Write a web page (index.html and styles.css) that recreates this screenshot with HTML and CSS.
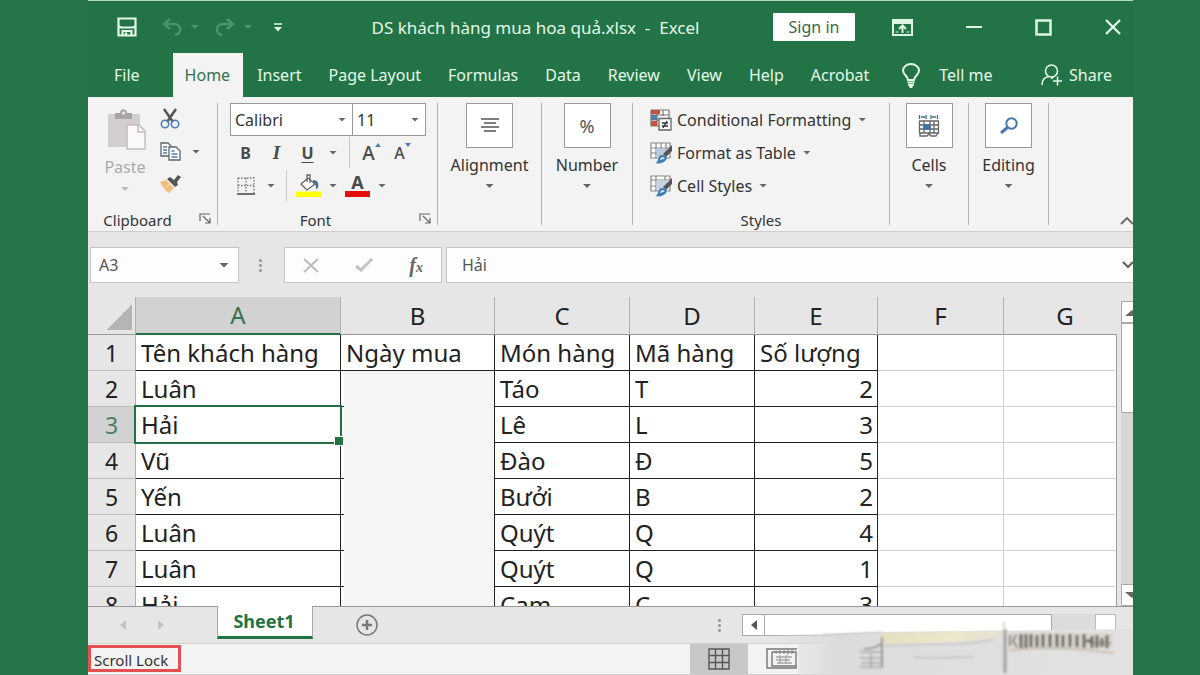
FILE: index.html
```html
<!DOCTYPE html>
<html lang="en">
<head>
<meta charset="utf-8">
<title>DS khách hàng mua hoa quả.xlsx - Excel</title>
<link rel="stylesheet" href="styles.css">
</head>
<body>
<div class="window">
  <header class="titlebar">
    <div class="quick">
      <button class="plain" aria-label="Save"><svg width="20" height="20" viewBox="0 0 20 20" fill="none" stroke="#e4f8e8" stroke-width="2.200"><path d="M1.500 1.500h17v17h-17z"/><path d="M2 9.500l2 1h12l2-1" /><path d="M5.500 19v-5h9v5"/><path d="M9 15.500v3" stroke-width="2.500"/></svg></button>
      <button class="plain undo" aria-label="Undo"><svg width="20" height="18" viewBox="0 0 20 18" fill="none" stroke="#4b9469" stroke-width="2.500"><path d="M8 1L2 6l6 5M2 6h10c8 0 8 10 1 11"/></svg></button>
      <i class="caret dim"></i>
      <button class="plain redo" aria-label="Redo"><svg width="20" height="18" viewBox="0 0 20 18" fill="none" stroke="#4b9469" stroke-width="2.500"><path d="M12 1l6 5-6 5M18 6H8C0 6 0 16 7 17"/></svg></button>
      <i class="caret dim"></i>
      <button class="plain custom" aria-label="Customize Quick Access Toolbar"><svg width="8" height="9" viewBox="0 0 8 9"><path d="M0 1h8" stroke="#e4f8e8" stroke-width="1.500"/><path d="M0 4h8L4 8.500z" fill="#e4f8e8"/></svg></button>
    </div>
    <h1 class="doc">DS khách hàng mua hoa quả.xlsx&nbsp; - &nbsp;Excel</h1>
    <div class="winctl">
      <button class="signin">Sign in</button>
      <button class="plain" aria-label="Ribbon display options"><svg width="21" height="17" viewBox="0 0 21 17" fill="none" stroke="#dff5e4" stroke-width="2"><path d="M1 1h19v15H1z"/><path d="M1 3.500h19" stroke-width="3"/><path d="M10.500 14V7M7 10l3.500-3.500L14 10"/><path d="M3.500 13h3M14.500 13h3" stroke-width="1"/></svg></button>
      <button class="plain" aria-label="Minimize"><svg width="16" height="17" viewBox="0 0 16 17"><path d="M0 8h16" stroke="#dff5e4" stroke-width="2"/></svg></button>
      <button class="plain" aria-label="Maximize"><svg width="17" height="17" viewBox="0 0 17 17"><path d="M1.500 1.500h14v14h-14z" fill="none" stroke="#dff5e4" stroke-width="2.500"/></svg></button>
      <button class="plain" aria-label="Close"><svg width="16" height="16" viewBox="0 0 16 16"><path d="M1 1l14 14M15 1L1 15" stroke="#dff5e4" stroke-width="2.400"/></svg></button>
    </div>
  </header>

  <nav class="tabs">
    <button class="tab file">File</button>
    <button class="tab active">Home</button>
    <button class="tab">Insert</button>
    <button class="tab">Page Layout</button>
    <button class="tab">Formulas</button>
    <button class="tab">Data</button>
    <button class="tab">Review</button>
    <button class="tab">View</button>
    <button class="tab">Help</button>
    <button class="tab">Acrobat</button>
    <button class="tab tell"><svg width="18" height="25" viewBox="0 0 18 25" fill="none" stroke="#e4f8e8" stroke-width="2"><path d="M6 17c0-4-5-5-5-9.500a8 6.500 0 0 1 16 0C17 12 12 13 12 17z"/><path d="M5.500 19.500h7M6 22h6M7.500 24h3"/></svg>Tell me</button>
    <button class="tab share"><svg width="21" height="22" viewBox="0 0 21 22" fill="none" stroke="#e4f8e8" stroke-width="1.600"><circle cx="10.500" cy="7" r="6"/><path d="M1 21c0-5 3-8 7-8.500M10 14.500l3-2M12 17h9M16.500 12.500v9"/></svg>Share</button>
  </nav>

  <section class="ribbon">
    <div class="group clipboard">
      <div class="gbody">
        <button class="paste"><svg width="40" height="42" viewBox="0 0 40 42"><path d="M1 5h32v33H1z" fill="#d3ced2"/><path d="M8 10V4h5c0-5 7-5 7 0h5v6z" fill="#a9a6a9"/><circle cx="16.500" cy="4" r="1.500" fill="#f3f3f3"/><path d="M20 16h12l6 6v18H20z" fill="#fbf8fb" stroke="#c2bdc1" stroke-width="1.500"/><path d="M31 16v7h7" fill="none" stroke="#c2bdc1" stroke-width="1.500"/></svg><span>Paste</span><i class="caret light"></i></button>
        <div class="clips">
          <button class="plain" aria-label="Cut"><svg width="20" height="21" viewBox="0 0 20 21" fill="none"><path d="M4 1l9 13M16 1L7 14" stroke="#555" stroke-width="2.500"/><circle cx="5" cy="16" r="3.700" stroke="#4d7fae" stroke-width="1.600"/><circle cx="15" cy="16" r="3.700" stroke="#4d7fae" stroke-width="1.600"/></svg></button>
          <div class="copyrow"><button class="plain" aria-label="Copy"><svg width="21" height="19" viewBox="0 0 21 19" fill="#fff" stroke="#5c6670" stroke-width="1.300"><path d="M1 1h7l3 3v10H1z"/><path d="M9 5h7l4 4v9H9z"/><path d="M3 5h4M3 8h4M3 11h4M11.500 9h3M11.500 12h6M11.500 15h6" stroke="#4d7fae"/></svg></button><i class="caret"></i></div>
          <button class="plain" aria-label="Format Painter"><svg width="21" height="19" viewBox="0 0 21 19"><path d="M0 8l6-2 8 8-5 5C5 17 2 12 0 8z" fill="#f0bf7d"/><path d="M7 5l3-2 4 3 4-5 3 2-4 5 1 3-3 2z" fill="#555"/><path d="M5 14l5-4" stroke="#fbe3bd"/></svg></button>
        </div>
      </div>
      <div class="gname"><span>Clipboard</span><button class="plain launch" aria-label="Clipboard settings"><svg width="12" height="11" viewBox="0 0 12 11" fill="none" stroke="#666" stroke-width="1.200"><path d="M1 8V1h10M4 3l7 7M11 5v5H6"/></svg></button></div>
    </div>

    <div class="group font">
      <div class="fontbox">
        <div class="combos">
          <div class="combo family"><select aria-label="Font"><option>Calibri</option></select><i class="caret"></i></div>
          <div class="combo size"><select aria-label="Font size"><option>11</option></select><i class="caret"></i></div>
        </div>
        <div class="frow">
          <button class="fb">B</button><button class="fb ital">I</button><button class="fb under">U</button><button class="fc" aria-label="Underline options"><i class="caret"></i></button>
          <span class="vsep"></span>
          <button class="fb grow" aria-label="Increase font size">A<svg width="6" height="16" viewBox="0 0 6 16"><path d="M0 4h6L3 0z" fill="#4d7fae"/></svg></button><button class="fb shrink" aria-label="Decrease font size">A<svg width="6" height="16" viewBox="0 0 6 16"><path d="M0 0h6L3 4z" fill="#4d7fae"/></svg></button>
        </div>
        <div class="frow">
          <button class="fb" aria-label="Borders"><svg width="18" height="18" viewBox="0 0 18 18" fill="none" stroke="#777" stroke-width="1.300"><path d="M1 1h16v15M1 1v15M9 1v15M1 8.500h16" stroke-dasharray="1.500 1.500"/><path d="M0 17h18" stroke="#444" stroke-width="1.500"/></svg></button><button class="fc" aria-label="Border options"><i class="caret"></i></button>
          <span class="vsep s2"></span>
          <button class="fb paint" aria-label="Fill color"><svg width="25" height="23" viewBox="0 0 25 23"><path d="M0 17.500h25V23H0z" fill="#ffff08"/><path d="M5 10l7-6 7 6-8 6z" fill="#fff" stroke="#666" stroke-width="1.300"/><path d="M11 8V1h3v8" fill="none" stroke="#666" stroke-width="1.300"/><path d="M17 6c5 0 6 3 5 8l-2 1c0-4-1-5-3-6z" fill="#4d7199"/></svg></button><button class="fc" aria-label="Fill options"><i class="caret"></i></button>
          <button class="fb paint" aria-label="Font color"><span class="inkletter">A</span></button><button class="fc" aria-label="Font color options"><i class="caret"></i></button>
        </div>
      </div>
      <div class="gname"><span>Font</span><button class="plain launch" aria-label="Font settings"><svg width="12" height="11" viewBox="0 0 12 11" fill="none" stroke="#666" stroke-width="1.200"><path d="M1 8V1h10M4 3l7 7M11 5v5H6"/></svg></button></div>
    </div>

    <div class="group align"><button class="big"><span class="tile"><svg width="20" height="16" viewBox="0 0 20 16" stroke="#555" stroke-width="1.300"><path d="M1 1h18M4 5h12M1 9h18M4 13h12"/></svg></span>Alignment<i class="caret"></i></button></div>
    <div class="group number"><button class="big"><span class="tile pct">%</span>Number<i class="caret"></i></button></div>

    <div class="group styles">
      <div class="slist">
        <button class="sitem"><svg width="22" height="22" viewBox="0 0 22 22"><path d="M1 1h18v8M1 1v16h8M1 6h18M1 11h8M7 1v16M13 1v6" fill="#fff" stroke="#777" stroke-width="1.200"/><path d="M1 1h9v4H1zM1 12h6v5H1z" fill="#c9503f"/><path d="M1 6h6v5H1z" fill="#4d7fae"/><path d="M9 9.500h12V21H9z" fill="#fff" stroke="#666" stroke-width="1.300"/><path d="M12 14h6M12 17h6M17 12l-4 7" stroke="#333" stroke-width="1.300"/></svg>Conditional Formatting<i class="caret"></i></button>
        <button class="sitem"><svg width="22" height="22" viewBox="0 0 22 22"><path d="M1 1h19v15H1zM1 6h19M1 11h19M6 1v15M11 1v15M16 1v15" fill="#fff" stroke="#888" stroke-width="1.200"/><path d="M6.500 6.500h9v9h-9z" fill="#b9cbe0"/><path d="M22 3v6l-6 6-3-3z" fill="#555"/><path d="M5 21c4 0 2-8 7-8 4 0 6 3 4 5-2 3-7 4-11 3z" fill="#3f7fb8"/><path d="M11 18c0-2 2-3 3-1" fill="none" stroke="#dbe9f5" stroke-width="1.500"/></svg>Format as Table<i class="caret"></i></button>
        <button class="sitem"><svg width="22" height="22" viewBox="0 0 22 22"><path d="M1 1h19v15H1zM1 5h19M6 1v15M15 1v4M1 11h5" fill="#fff" stroke="#888" stroke-width="1.200"/><path d="M6.500 5.500h11v9h-11z" fill="#c5d3e4"/><path d="M22 3v6l-6 6-3-3z" fill="#555"/><path d="M5 21c4 0 2-8 7-8 4 0 6 3 4 5-2 3-7 4-11 3z" fill="#3f7fb8"/><path d="M11 18c0-2 2-3 3-1" fill="none" stroke="#dbe9f5" stroke-width="1.500"/></svg>Cell Styles<i class="caret"></i></button>
      </div>
      <div class="gname"><span>Styles</span></div>
    </div>

    <div class="group cells"><button class="big"><span class="tile"><svg width="22" height="23" viewBox="0 0 22 23" fill="none" stroke="#666" stroke-width="1.300"><path d="M1.500 7h19v12h-19zM1.500 11h19M1.500 15h19M6 7v12M12 7v12M16 7v12M2 19v3h7l2-2 2 2h5l2-3"/><path d="M6 11h6v4H6z" fill="#3f74a5" stroke="#3f74a5"/><path d="M1.500 1v4M19.500 1v4M8 1v4M13 1v4M3 3h4M14 3h4" stroke="#3f6f86"/></svg></span>Cells<i class="caret"></i></button></div>
    <div class="group editing"><button class="big"><span class="tile"><svg width="18" height="17" viewBox="0 0 18 17" fill="none" stroke="#4377ad"><circle cx="11.500" cy="6.500" r="5.200" stroke-width="2"/><path d="M7.500 10.500L1 16" stroke-width="3"/></svg></span>Editing<i class="caret"></i></button></div>
    <button class="plain collapse" aria-label="Collapse the ribbon"><svg width="13" height="9" viewBox="0 0 13 9"><path d="M1 8l6-6 6 6" fill="none" stroke="#666" stroke-width="1.800"/></svg></button>
  </section>

  <section class="formula">
    <div class="namebox"><input type="text" value="A3" aria-label="Name box"><i class="caret wide"></i></div>
    <span class="dots"></span>
    <div class="fxbox">
      <button class="plain" aria-label="Cancel"><svg width="16" height="15" viewBox="0 0 16 15"><path d="M1 1l14 13M15 1L1 14" stroke="#bcbcbc" stroke-width="2"/></svg></button>
      <button class="plain" aria-label="Enter"><svg width="18" height="14" viewBox="0 0 18 14"><path d="M1 8l5 4L17 1" fill="none" stroke="#c2c2c2" stroke-width="3"/></svg></button>
      <button class="plain fx" aria-label="Insert function">f<small>x</small></button>
    </div>
    <div class="fbar"><input type="text" value="Hải" aria-label="Formula bar"><svg width="11" height="8" viewBox="0 0 11 8"><path d="M1 1l5 5 5-5" fill="none" stroke="#666" stroke-width="2.200"/></svg></div>
  </section>

  <main class="sheet">
    <div class="gridwrap">
      <table class="grid">
        <colgroup><col class="c0"><col class="ca"><col class="cb"><col class="cc"><col class="cd"><col class="ce"><col class="cf"><col></colgroup>
        <thead><tr><th class="corner"></th><th class="sel">A</th><th>B</th><th>C</th><th>D</th><th>E</th><th>F</th><th class="last">G</th></tr></thead>
        <tbody>
          <tr><th>1</th><td>Tên khách hàng</td><td>Ngày mua</td><td>Món hàng</td><td>Mã hàng</td><td>Số lượng</td><td class="e"></td><td class="e last"></td></tr>
          <tr><th>2</th><td>Luân</td><td class="hid"></td><td>Táo</td><td>T</td><td class="n">2</td><td class="e"></td><td class="e last"></td></tr>
          <tr><th class="sel">3</th><td class="cur">Hải</td><td class="hid"></td><td>Lê</td><td>L</td><td class="n">3</td><td class="e"></td><td class="e last"></td></tr>
          <tr><th>4</th><td>Vũ</td><td class="hid"></td><td>Đào</td><td>Đ</td><td class="n">5</td><td class="e"></td><td class="e last"></td></tr>
          <tr><th>5</th><td>Yến</td><td class="hid"></td><td>Bưởi</td><td>B</td><td class="n">2</td><td class="e"></td><td class="e last"></td></tr>
          <tr><th>6</th><td>Luân</td><td class="hid"></td><td>Quýt</td><td>Q</td><td class="n">4</td><td class="e"></td><td class="e last"></td></tr>
          <tr><th>7</th><td>Luân</td><td class="hid"></td><td>Quýt</td><td>Q</td><td class="n">1</td><td class="e"></td><td class="e last"></td></tr>
          <tr><th>8</th><td>Hải</td><td class="hid"></td><td>Cam</td><td>C</td><td class="n">3</td><td class="e"></td><td class="e last"></td></tr>
        </tbody>
      </table>
    </div>
    <div class="vscroll">
      <button class="sbtn" aria-label="Scroll up"><svg width="14" height="7" viewBox="0 0 14 7"><path d="M0 7l7-6 7 6z" fill="#666"/></svg></button>
      <div class="thumb"></div>
      <div class="track"></div>
      <button class="sbtn" aria-label="Scroll down"><svg width="14" height="7" viewBox="0 0 14 7"><path d="M0 0l7 6 7-6z" fill="#666"/></svg></button>
    </div>
  </main>

  <footer class="bottom">
    <div class="sheets">
      <div class="arrows"><svg width="6" height="10" viewBox="0 0 6 10"><path d="M6 0v10L0 5z" fill="#c3c3c3"/></svg><svg width="6" height="10" viewBox="0 0 6 10"><path d="M0 0v10l6-5z" fill="#c3c3c3"/></svg></div>
      <button class="stab">Sheet1</button>
      <button class="plain add" aria-label="New sheet"><svg width="22" height="22" viewBox="0 0 22 22" fill="none" stroke="#777"><circle cx="11" cy="11" r="10" stroke-width="1.500"/><path d="M11 6v10M6 11h10" stroke-width="2.500"/></svg></button>
      <span class="dots"></span>
      <div class="hscroll"><button class="hbtn" aria-label="Scroll left"><svg width="6" height="10" viewBox="0 0 6 10"><path d="M6 0v10L0 5z" fill="#555"/></svg></button><div class="hthumb"></div><div class="htrack"></div><div class="hend"></div></div>
    </div>
    <div class="status">
      <span class="lock">Scroll Lock</span>
      <button class="view on" aria-label="Normal view"><svg width="22" height="22" viewBox="0 0 22 22"><path d="M1 1h20v20H1zM1 7.500h20M1 14.500h20M7.500 1v20M14.500 1v20" fill="none" stroke="#555" stroke-width="1.400"/></svg></button>
      <button class="view" aria-label="Page layout view"><svg width="32" height="22" viewBox="0 0 32 22" fill="none" stroke="#777" stroke-width="1.400"><path d="M31 1H1v19h30M6 4v14h25M6 4h24v14"/><path d="M10 3v3M14 2v4M18 2v4M22 2v5M26 2v4M10 9h16M10 12h14M11 15h15M14 7v9M20 7v9" opacity=".6"/></svg></button>
    </div>
    <svg class="smear" viewBox="0 0 370 54" aria-hidden="true">
      <defs>
        <linearGradient id="g" x1="0" x2="1" y1="0" y2="0"><stop offset="0" stop-color="#dcdcdc" stop-opacity="0"/><stop offset=".2" stop-color="#dcdcdc"/><stop offset="1" stop-color="#e2e2e2"/></linearGradient>
        <linearGradient id="y" x1="0" x2="1" y1="0" y2="0"><stop offset="0" stop-color="#e5dfc2"/><stop offset=".6" stop-color="#eee7ca"/><stop offset="1" stop-color="#e3dfd2"/></linearGradient>
        <filter id="b" x="-10%" y="-10%" width="120%" height="120%"><feGaussianBlur stdDeviation="1"/></filter>
      </defs>
      <path d="M0 15C40 13 80 12 120 11L370 8V54H35V22z" fill="url(#g)"/>
      <g filter="url(#b)" fill="none">
        <path d="M60 14l60-3" stroke="#c2c2c2"/>
        <path d="M117 12l123-2v6c-30 4-80 6-120 7z" fill="url(#y)"/>
        <path d="M122 25c40-3 70 1 108-6M150 36c20 2 35 0 60 0" stroke="#b5b5b5"/>
        <path d="M97 31h22v15H97M97 37h22M98 42h20M108 31v16" stroke="#aaa" stroke-width="1.500"/>
        <path d="M119 16v31M101 28c8 0 15-2 19-7" stroke="#999" stroke-width="2"/>
        <path d="M241 0v8" stroke="#bbb"/><path d="M242 8v44" stroke="#a3a3a3" stroke-width="3"/>
        <path d="M246 12h104l-1 15c-30-1-65 3-103 0z" fill="#dbd7d0"/>
        <path d="M258 13v14M263 13v14M268 13v13M274 14v12M280 13v13M287 13v13M294 13v13M300 14v12M307 13v13M314 14v12M321 13v14M323 20h6M329 15v12M334 14v13M339 17v9M344 14v13" stroke="#6d665f" stroke-width="3"/>
        <path d="M246 29c35-3 70-2 105 3" stroke="#c9bfae" stroke-width="2"/>
        <path d="M247 14v11M253 14l-3 6 4 6M331 22h17" stroke="#8a847d" stroke-width="2"/>
      </g>
    </svg>
  </footer>
</div>
</body>
</html>
```

FILE: styles.css
```css
* { box-sizing: border-box; }
body {
  margin: 0;
  min-height: 100vh;
  padding: 0 67px 0 88px;
  display: flex;
  background: #267548;
  font-family: "Noto Sans", "Open Sans", sans-serif;
  font-size: 16px;
  color: #333;
}
button, input, select { font: inherit; color: inherit; }
button { border: 0; padding: 0; background: none; }
svg { display: block; flex: none; }
.plain { display: flex; align-items: center; }
.window {
  flex: 1;
  min-width: 0;
  display: flex;
  flex-direction: column;
  overflow: hidden;
  border-top: 1px solid #b5dcc2;
  background: #e6e6e6;
}
.caret {
  flex: none;
  width: 8px;
  height: 4px;
  background: #666;
  clip-path: polygon(0 0, 100% 0, 50% 100%);
}
.caret.wide { width: 10px; height: 5px; }
.caret.light { background: #bbb; }
.caret.dim { background: #4b9469; }

/* Title bar and tabs */
.titlebar {
  height: 52px;
  display: flex;
  align-items: center;
  justify-content: space-between;
  padding: 0 12px 0 29px;
  background: #227447;
  color: #e4f8e8;
}
.quick { display: flex; align-items: center; }
.undo { margin: 0 9px 0 25px; }
.redo { margin: 0 9px 0 16px; }
.custom { margin-left: 22px; }
.doc { margin: 0 0 0 16px; font-size: 17px; font-weight: 400; white-space: nowrap; }
.winctl { display: flex; align-items: center; gap: 53px; }
.signin { width: 82px; height: 28px; margin-right: -16px; background: #fff; color: #38684a; border-radius: 1px; }
.tabs { height: 44px; display: flex; gap: 1px; background: #227447; padding-right: 8px; }
.tab {
  display: flex;
  align-items: center;
  gap: 19px;
  padding: 0 13px;
  color: #e4f8e8;
  white-space: nowrap;
}
.tab.file { padding: 0 32px 0 26px; }
.tab.active { padding: 0 13px 0 12px; background: #f3f3f3; color: #35714d; }
.tab.tell { margin-left: 6px; }
.tab.share { margin-left: auto; gap: 7px; }

/* Ribbon */
.ribbon {
  display: flex;
  padding: 6px 0;
  height: 135px;
  background: #f3f3f3;
  border-bottom: 1px solid #cfcfcf;
}
.group { display: flex; flex-direction: column; border-right: 1px solid #b4b4b4; }
.clipboard { width: 130px; }
.font { width: 220px; }
.align { width: 104px; }
.number { width: 91px; }
.styles { width: 257px; }
.cells { width: 79px; }
.editing { width: 80px; }
.gbody { display: flex; flex: 1; }
.gname {
  position: relative;
  height: 18px;
  margin-top: auto;
  margin-bottom: -4px;
  text-align: center;
  font-size: 15px;
  line-height: 18px;
}
.clipboard .gname { padding-right: 30px; }
.font .gname { padding-right: 24px; }
.launch { position: absolute; right: 6px; top: 2px; }
.paste {
  width: 74px;
  display: flex;
  flex-direction: column;
  align-items: center;
  padding-top: 6px;
  color: #aaa;
}
.paste svg { margin-left: 4px; }
.paste span { line-height: 24px; margin: 4px 0 8px; }
.clips { display: flex; flex-direction: column; gap: 13px; margin-left: -2px; padding-top: 5px; }
.copyrow { display: flex; align-items: center; gap: 11px; }

.fontbox { padding-left: 12px; }
.combos { display: flex; }
.combo {
  display: flex;
  align-items: center;
  height: 33px;
  background: #fff;
  border: 1px solid #999;
  padding-right: 6px;
}
.combo select { flex: 1; min-width: 0; border: 0; background: none; appearance: none; padding: 0 4px; outline: 0; }
.combo.family { width: 123px; }
.combo.size { width: 73px; border-left: 0; }
.frow { display: flex; align-items: center; height: 33px; }
.fb { width: 31px; height: 30px; display: flex; align-items: center; justify-content: center; color: #4a4a4a; font-size: 16px; font-weight: 700; }
.ital { font-family: "Liberation Serif", serif; font-style: italic; font-size: 19px; }
.under { text-decoration: underline; text-underline-offset: 3px; }
.fc { width: 20px; height: 30px; display: flex; align-items: center; justify-content: center; }
.vsep { width: 1px; height: 31px; margin: 0 6px; background: #c8c8c8; }
.s2 { margin: 0 7px 0 5px; }
.grow, .shrink { font-weight: 500; }
.grow { font-size: 19px; }
.grow svg, .shrink svg { align-self: flex-start; margin-top: 5px; }
.paint { width: 29px; }
.inkletter { width: 25px; height: 23px; border-bottom: 6px solid #e60d0d; font-size: 18px; line-height: 17px; text-align: center; }

.big { display: flex; flex-direction: column; align-items: center; white-space: nowrap; line-height: 22px; }
.big .caret { margin-top: 8px; }
.tile {
  width: 47px;
  height: 45px;
  margin-bottom: 6px;
  display: flex;
  align-items: center;
  justify-content: center;
  background: #fff;
  border: 1px solid #999;
}
.pct { font-size: 18px; color: #555; }
.slist { display: flex; flex-direction: column; padding-left: 17px; }
.sitem { display: flex; align-items: center; gap: 5px; height: 33px; white-space: nowrap; }
.sitem .caret { margin-left: 2px; }
.collapse { margin: auto 0 0 auto; }

/* Formula bar */
.formula { display: flex; height: 65px; padding: 15px 0 14px 2px; }
.namebox, .fxbox, .fbar { display: flex; align-items: center; background: #fdfdfd; border: 1px solid #c6c6c6; }
.formula input { flex: 1; min-width: 0; border: 0; background: none; outline: 0; padding: 0 0 0 8px; color: #555; }
.namebox { width: 149px; padding-right: 9px; }
.dots { width: 3px; height: 15px; align-self: center; background: radial-gradient(circle, #999 1px, transparent 2px) 0 0 / 3px 5px; }
.formula .dots { margin: 0 22px 0 20px; }
.fxbox { width: 158px; justify-content: space-between; padding: 0 18px; }
.fx { font: italic 700 20px "Liberation Serif", serif; color: #666; align-items: baseline; }
.fx small { font-size: 14px; }
.fbar { flex: 1; margin-left: 4px; border-right: 0; }
.formula .fbar input { padding-left: 15px; }

/* Grid */
.sheet { display: flex; height: 309px; overflow: hidden; }
.gridwrap { flex: 1; overflow: hidden; }
.grid { width: 100%; table-layout: fixed; border-collapse: separate; border-spacing: 0; font-size: 24px; line-height: 32px; color: #222; }
.c0 { width: 48px; }
.ca { width: 205px; }
.cb { width: 154px; }
.cc { width: 135px; }
.cd { width: 125px; }
.ce { width: 123px; }
.cf { width: 126px; }
.grid th { padding: 0; font-weight: 400; background: #e6e6e6; border-right: 1px solid #b0b0b0; border-bottom: 1px solid #bdbdbd; }
.grid thead th { height: 38px; border-bottom-color: #999; }
.grid thead th.last { padding-left: 10px; border-right-color: #e6e6e6; }
.grid thead th.sel { background: #d2d2d2; color: #35714d; border-bottom: 2px solid #217346; }
.grid tbody th { font-size: 23px; }
.grid tbody th.sel { background: #d2d2d2; color: #4d7f62; }
.grid th.corner { background: linear-gradient(135deg, transparent 50%, #b5b5b5 50%) 18px 7px / 26px 26px no-repeat #e6e6e6; }
.grid td {
  height: 36px;
  padding: 0 4px 0 5px;
  background: #fff;
  border-right: 1px solid #222;
  border-bottom: 1px solid #222;
  white-space: nowrap;
}
.grid td.n { text-align: right; }
.grid td.e { border-color: #d0d0d0; }
.grid td.e.last { border-right-color: #999; }
.grid td.hid {
  border-bottom: 0;
  background: linear-gradient(#222, #222) 0 100% / 3px 1px no-repeat, linear-gradient(#fff, #fff) 0 0 / 3px 100% no-repeat, #f5f5f5;
}
.grid td.cur { position: relative; }
.cur::before { content: ""; position: absolute; inset: -2px; border: 2px solid #217346; }
.cur::after { content: ""; position: absolute; right: -4px; bottom: -4px; width: 8px; height: 8px; background: #217346; border: 1px solid #fff; }
.vscroll { width: 16px; padding: 4px 0 0 4px; display: flex; flex-direction: column; overflow: hidden; }
.sbtn { width: 22px; height: 22px; display: flex; align-items: center; justify-content: center; background: #fff; border: 1px solid #aaa; }
.thumb { width: 22px; height: 90px; background: #fff; border: 1px solid #aaa; }
.track { flex: 1; width: 22px; background: #d6d6d6; }

/* Sheet tabs and status bar */
.bottom { position: relative; flex: 1; display: flex; flex-direction: column; }
.sheets { display: flex; align-items: center; height: 38px; border-top: 1px solid #999; border-bottom: 1px solid #d0d0d0; }
.arrows { width: 129px; display: flex; gap: 32px; padding-left: 32px; }
.stab {
  align-self: flex-start;
  width: 96px;
  height: 33px;
  margin-top: -1px;
  padding-right: 2px;
  background: #fff;
  border: 1px solid #aaa;
  border-top: 0;
  border-bottom: 3px solid #217346;
  color: #217346;
  font-size: 18px;
  font-weight: 700;
}
.add { margin-left: 43px; }
.sheets .dots { margin: 0 21px 0 auto; }
.hscroll { display: flex; width: 374px; height: 22px; margin-right: 17px; }
.hbtn { width: 23px; display: flex; align-items: center; justify-content: center; background: #fff; border: 1px solid #aaa; }
.hthumb { flex: 1; background: #fff; border: 1px solid #aaa; border-left: 0; }
.htrack { width: 43px; background: #dcdcdc; }
.hend { width: 21px; background: #fff; border: 1px solid #bbb; }
.status { flex: 1; display: flex; background: #f3f3f3; border-bottom: 1px solid #ccc; }
.lock {
  width: 93px;
  height: 27px;
  margin-top: 1px;
  margin-right: auto;
  padding: 3px 0 0 3px;
  border: 3px solid #e25050;
  font-size: 15px;
  line-height: 18px;
  white-space: nowrap;
}
.view { width: 58px; display: flex; align-items: center; justify-content: center; }
.view.on { background: #c8c8c8; }
.view:last-child { margin-right: 327px; padding-left: 10px; }
.smear { position: absolute; right: 0; bottom: 0; width: 370px; height: 54px; }
```
